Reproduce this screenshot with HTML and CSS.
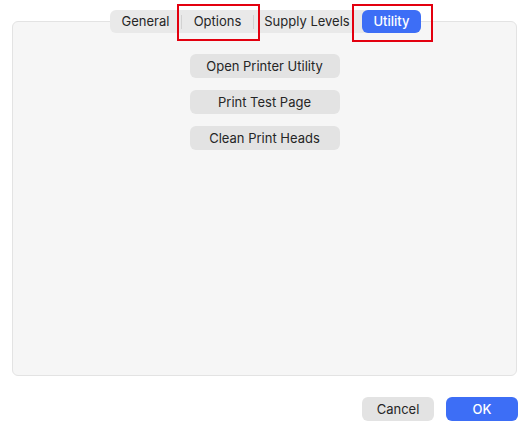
FILE: index.html
```html
<!DOCTYPE html>
<html>
<head>
<meta charset="utf-8">
<link rel="stylesheet" href="styles.css">
</head>
<body>
<div class="window">
  <div class="tabs-row">
    <div class="tabs">
      <div class="tab tab-general">General</div>
      <div class="sep"></div>
      <div class="tab tab-options">Options</div>
      <div class="sep"></div>
      <div class="tab tab-supply">Supply Levels</div>
      <div class="tab tab-utility active">Utility</div>
    </div>
  </div>
  <div class="panel">
    <button class="btn wide">Open Printer Utility</button>
    <button class="btn wide">Print Test Page</button>
    <button class="btn wide">Clean Print Heads</button>
  </div>
  <div class="footer">
    <button class="btn action">Cancel</button>
    <button class="btn action primary">OK</button>
  </div>
  <div class="mark mark-options"></div>
  <div class="mark mark-utility"></div>
</div>
</body>
</html>
```
FILE: styles.css
```css
html, body {
  margin: 0;
  padding: 0;
  background: #ffffff;
}
body {
  font-family: Inter, "Noto Sans", "Liberation Sans", sans-serif;
  font-size: 13px;
  color: #262626;
}
.window {
  position: relative;
  width: 528px;
  height: 430px;
  padding: 10px 10px 0 12px;
  box-sizing: border-box;
}
.tabs-row {
  display: flex;
  padding-left: 98px;
  position: relative;
  z-index: 2;
  margin-bottom: -12px;
}
.tabs {
  display: flex;
  align-items: center;
  height: 23px;
  background: #e9e9e9;
  border-radius: 6px;
}
.tab {
  height: 23px;
  line-height: 23px;
  text-align: center;
  box-sizing: border-box;
  color: #262626;
}
.tab-general { width: 71px; }
.tab-options { width: 71px; }
.tab-supply { width: 108px; padding-right: 2px; }
.tab-utility { width: 59px; }
.sep {
  width: 1px;
  height: 14px;
  background: #d2d2d2;
}
.tab.active {
  background: #3d6ef6;
  color: #ffffff;
  border-radius: 6px;
  font-weight: 500;
}
.panel {
  height: 355px;
  width: 505px;
  box-sizing: border-box;
  background: #f6f6f6;
  border: 1px solid #e3e3e3;
  border-radius: 6px;
  display: flex;
  flex-direction: column;
  align-items: center;
  padding-top: 32px;
  gap: 12px;
}
.btn {
  font-family: inherit;
  font-size: 13px;
  color: #262626;
  background: #e3e3e3;
  border: none;
  border-radius: 6px;
  height: 24px;
  padding: 0;
  margin: 0;
}
.btn.wide {
  width: 150px;
}
.footer {
  display: flex;
  justify-content: flex-end;
  gap: 12px;
  margin-top: 21px;
}
.btn.action {
  width: 72px;
}
.btn.primary {
  background: #3d6ef6;
  color: #ffffff;
  font-weight: 500;
}
.mark {
  position: absolute;
  border: 2px solid #e3000f;
  box-sizing: border-box;
  z-index: 5;
}
.mark-options {
  left: 177px;
  top: 4px;
  width: 83px;
  height: 37px;
}
.mark-utility {
  left: 352px;
  top: 4px;
  width: 81px;
  height: 38px;
}
```
